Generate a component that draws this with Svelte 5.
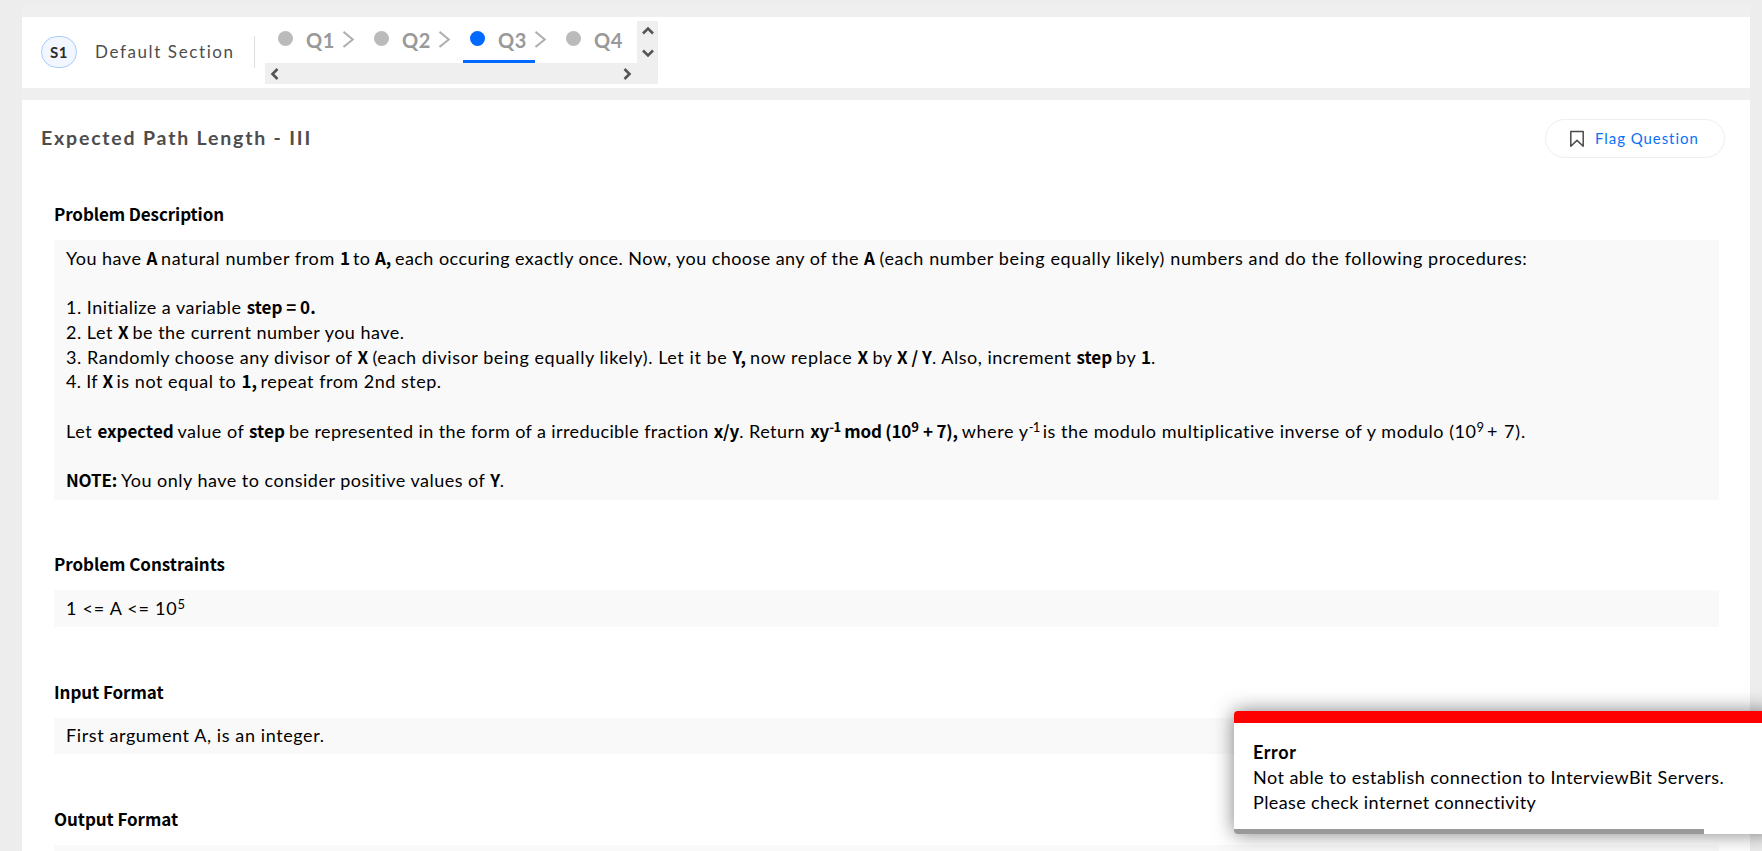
<script>
  const questions = [
    { label: 'Q1', active: false },
    { label: 'Q2', active: false },
    { label: 'Q3', active: true },
    { label: 'Q4', active: false }
  ];

  // Each run is [text, advance width, style]: '' regular, 'b' bold, 's' superscript, 'bs' bold superscript.
  const intro = [
    ['You have ', 80.5, ''], ['A ', 14.5, 'b'], ['natural number from ', 179, ''], ['1 ', 13, 'b'],
    ['to ', 22, ''], ['A, ', 20, 'b'], ['each occuring exactly once. Now, you choose any of the ', 469, ''],
    ['A ', 15.5, 'b'], ['(each number being equally likely) numbers and do the following procedures:', 648, '']
  ];
  const steps = [
    [['1. Initialize a variable ', 181, ''], ['step = 0.', 69, 'b']],
    [['2. Let ', 52, ''], ['X ', 14.5, 'b'], ['be the current number you have.', 272, '']],
    [
      ['3. Randomly choose any divisor of ', 291.5, ''], ['X ', 15, 'b'],
      ['(each divisor being equally likely). Let it be ', 360, ''], ['Y, ', 17.5, 'b'],
      ['now replace ', 107.5, ''], ['X ', 15, 'b'], ['by ', 24.5, ''], ['X / Y', 35, 'b'],
      ['. Also, increment ', 144.5, ''], ['step ', 39.5, 'b'], ['by ', 25, ''], ['1', 10, 'b'], ['.', 5, '']
    ],
    [['4. If ', 36.5, ''], ['X ', 14, 'b'], ['is not equal to ', 125, ''], ['1, ', 19, 'b'], ['repeat from 2nd step.', 181, '']]
  ];
  const expected = [
    ['Let ', 31.5, ''], ['expected ', 80, 'b'], ['value of ', 71.5, ''], ['step ', 40, 'b'],
    ['be represented in the form of a irreducible fraction ', 425, ''], ['x/y', 25.5, 'b'],
    ['. Return ', 71, ''], ['xy', 19, 'b'], ['-1', 11.5, 'bs'], [' mod (10', 70.5, 'b'], ['9', 8, 'bs'],
    [' + 7), ', 42.5, 'b'], ['where y', 67, ''], ['-1', 11, 's'],
    [' ', 3, ''], ['is the modulo multiplicative inverse of y modulo (10', 434.5, ''], ['9', 7.5, 's'],
    [' ', 3, ''], ['+ 7).', 39, '']
  ];
  const note = [['NOTE: ', 55, 'b'], ['You only have to consider positive values of ', 369.5, ''], ['Y', 9.5, 'b'], ['.', 5, '']];

  const sections = [
    { title: 'Problem Description', width: 170, height: 260, pad: 6, gap: 53, lines: [intro, null, ...steps, null, expected, null, note] },
    { title: 'Problem Constraints', width: 171, height: 37, pad: 6, gap: 54, lines: [[['1 <= A <= 10', 111.5, ''], ['5', 7, 's']]] },
    { title: 'Input Format', width: 109.5, height: 36, pad: 5, gap: 54, lines: [[['First argument A, is an integer.', 258.5, '']]] },
    { title: 'Output Format', width: 124, height: 36, pad: 5, gap: 54, lines: [] }
  ];

  // Tracks a run of text so that it spans the given width.
  function fit(node, width) {
    const natural = node.getBoundingClientRect().width;
    node.style.letterSpacing = `${(width - natural) / node.textContent.length}px`;
  }
</script>

<div class="page">
  <div class="content">
    <header class="card nav">
      <span class="badge"><span use:fit={18}>S1</span></span>
      <span class="section-name"><span use:fit={140}>Default Section</span></span>
      <div class="scroller">
        <div class="questions">
          {#each questions as q, i}
            <div class="question" class:active={q.active}>
              <i class="dot"></i>
              <span>{q.label}</span>
            </div>
            {#if i < questions.length - 1}
              <svg class="next" width="24" height="20" viewBox="0 0 24 20"><path d="M.5 1.8 9.8 9.4.5 17" fill="none" stroke="#b0b0b0" stroke-width="2" /></svg>
            {/if}
          {/each}
        </div>
        <div class="vbar">
          <svg width="12" height="9" viewBox="0 0 12 9"><path d="M1 7.5 6 2.5l5 5" /></svg>
          <svg width="12" height="9" viewBox="0 0 12 9"><path d="M1 1.5l5 5 5-5" /></svg>
        </div>
        <div class="hbar">
          <svg width="9" height="12" viewBox="0 0 9 12"><path d="M7.5 1 2.5 6l5 5" /></svg>
          <svg width="9" height="12" viewBox="0 0 9 12"><path d="M1.5 1l5 5-5 5" /></svg>
        </div>
      </div>
    </header>

    <main class="card problem">
      <div class="title-row">
        <h1><span use:fit={271}>Expected Path Length - III</span></h1>
        <button>
          <svg width="16" height="18" viewBox="0 0 16 18"><path d="M1.8 1.6H14.2V16.2L8 10.4 1.8 16.2Z" fill="none" stroke="#4a4a4a" stroke-width="1.5" stroke-linejoin="round" /></svg>
          <span class="flag" use:fit={104}>Flag Question</span>
        </button>
      </div>

      {#each sections as s}
        <section style="margin-bottom: {s.gap}px">
          <h2><span use:fit={s.width}>{s.title}</span></h2>
          <div class="box" style="height: {s.height}px; padding-top: {s.pad}px">
            {#each s.lines as line}
              <div class="line">{#if line}{#each line as [text, width, kind]}<span class="run" class:bold={kind.includes('b')} class:sup={kind.includes('s')} use:fit={width}>{text}</span>{/each}{/if}</div>
            {/each}
          </div>
        </section>
      {/each}
    </main>
  </div>

  <aside class="toast">
    <strong><span use:fit={43.5}>Error</span></strong>
    <p><span use:fit={471.5}>Not able to establish connection to InterviewBit Servers.</span></p>
    <p><span use:fit={283.5}>Please check internet connectivity</span></p>
    <div class="progress"></div>
  </aside>
</div>

<style>
  :global(body) {
    background: #ededed;
  }
  .page {
    box-sizing: border-box;
    position: relative;
    height: 851px;
    padding: 5px 12px 0 22px;
    overflow: hidden;
    font-family: Lato, 'Open Sans', sans-serif;
    font-size: 18px;
    color: #000;
  }
  .content {
    display: flex;
    flex-direction: column;
    gap: 12px;
    padding-top: 12px;
    background: #efefef;
  }
  .card {
    background: #fff;
    box-sizing: border-box;
  }
  .nav {
    flex: none;
    height: 71px;
    padding: 4px 0 0 19px;
    display: flex;
    align-items: flex-start;
  }
  .badge {
    box-sizing: border-box;
    width: 36px;
    height: 32px;
    margin-top: 15px;
    border: 1px solid #a9cdfb;
    border-radius: 16px;
    background: #f2f7ff;
    color: #2b2b2b;
    font-weight: 700;
    font-size: 15px;
    line-height: 30px;
    text-align: center;
    white-space: nowrap;
  }
  .section-name {
    box-sizing: border-box;
    width: 178px;
    height: 32px;
    margin-top: 15px;
    padding-left: 18px;
    border-right: 1px solid #ddd;
    color: #4d4d4d;
    font-size: 17px;
    line-height: 32px;
    white-space: nowrap;
  }
  .scroller {
    width: 393px;
    height: 63px;
    margin-left: 10px;
    display: grid;
    grid-template-columns: 372px 21px;
    grid-template-rows: 42px 21px;
    background: #efefef;
  }
  .scroller svg {
    flex: none;
  }
  .questions {
    display: flex;
    padding-left: 6px;
    background: #fff;
    overflow: hidden;
  }
  .question {
    flex: none;
    box-sizing: border-box;
    width: 72px;
    height: 42px;
    padding: 9px 0 0 7px;
    display: flex;
    gap: 13px;
    color: #999;
    font-size: 20px;
    font-weight: 700;
    line-height: 20px;
    letter-spacing: 0.5px;
  }
  .question.active {
    border-bottom: 3px solid #0069ff;
  }
  .dot {
    width: 15px;
    height: 15px;
    margin-top: 1px;
    border-radius: 50%;
    background: #bbb;
  }
  .active .dot {
    background: #0069ff;
  }
  .next {
    margin-top: 9px;
  }
  .vbar {
    display: flex;
    flex-direction: column;
    align-items: center;
    justify-content: space-between;
    height: 32px;
    padding: 5px 0;
  }
  .hbar {
    display: flex;
    align-items: center;
    justify-content: space-between;
    padding: 0 5px 0 5px;
  }
  .vbar path,
  .hbar path {
    fill: none;
    stroke: #555;
    stroke-width: 2.6;
  }
  .problem {
    flex: none;
    height: 751px;
    padding: 19px 31px 0 32px;
    overflow: hidden;
  }
  .title-row {
    display: flex;
    justify-content: space-between;
    height: 39px;
    margin: 0 -6px 45px -13px;
  }
  h1 {
    margin: 0;
    color: #4d4d4d;
    font-size: 19.5px;
    font-weight: 700;
    line-height: 38px;
    white-space: nowrap;
  }
  button {
    box-sizing: border-box;
    width: 180px;
    height: 39px;
    padding: 0 0 0 23px;
    display: flex;
    align-items: center;
    gap: 10px;
    border: 1px solid #eee;
    border-radius: 20px;
    background: #fff;
    color: #0a72f5;
    font-family: inherit;
    font-size: 15px;
    white-space: nowrap;
  }
  .flag {
    padding-bottom: 2px;
  }
  h2 {
    margin: 0 0 16px;
    height: 21px;
    font-family: 'Noto Sans CJK SC', sans-serif;
    font-size: 17px;
    font-weight: 700;
    line-height: 21px;
    white-space: nowrap;
  }
  .box {
    box-sizing: border-box;
    padding: 0 12px;
    background: #f9f9f9;
  }
  .line {
    height: 24.67px;
    line-height: 24.67px;
    white-space: pre;
  }
  .bold {
    font-family: 'Noto Sans CJK SC', sans-serif;
    font-size: 17px;
    font-weight: 700;
    line-height: 0;
  }
  .sup {
    font-size: 13px;
    line-height: 0;
    vertical-align: 6px;
  }
  .toast {
    box-sizing: border-box;
    position: absolute;
    left: 1234px;
    top: 711px;
    width: 540px;
    height: 123px;
    padding: 17px 19px 0;
    border-top: 12px solid #f00;
    border-radius: 4px;
    background: #fff;
    box-shadow: 0 0 20px rgba(0, 0, 0, 0.5);
    overflow: hidden;
    line-height: 25px;
    white-space: nowrap;
  }
  .toast strong {
    display: block;
  }
  .toast p {
    margin: 0;
  }
  .progress {
    width: 470px;
    height: 5px;
    margin: 14px 0 0 -19px;
    background: #999;
  }
</style>
